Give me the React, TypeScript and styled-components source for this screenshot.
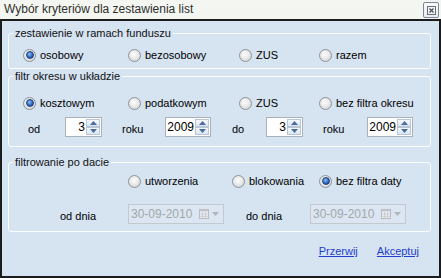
import React from 'react'
import styled, { createGlobalStyle } from 'styled-components'

const GlobalStyle = createGlobalStyle`
  html, body {
    margin: 0;
    padding: 0;
    width: 441px;
    height: 278px;
    overflow: hidden;
    font-family: "Liberation Sans", Arial, sans-serif;
  }
`

const Window = styled.div`
  width: 441px;
  height: 278px;
  display: flex;
  flex-direction: column;
  box-sizing: border-box;
  background: linear-gradient(#f4f7f1, #ebf1e9);
`

const TitleBar = styled.div`
  height: 19px;
  display: flex;
  align-items: center;
  justify-content: space-between;
  padding: 0 2px 0 4px;
  .title {
    font-size: 12px;
    color: #2e2e2e;
    line-height: 19px;
  }
`

const CloseBtn = styled.div`
  width: 16px;
  height: 16px;
  box-sizing: border-box;
  border: 1px solid #7c8896;
  border-radius: 2px;
  background: linear-gradient(#fafbfc, #e9edf1);
  display: flex;
  align-items: center;
  justify-content: center;
  margin-top: 1px;
`

const Body = styled.div`
  flex: 1;
  border: 2px solid #1c1c1c;
  background: #d6e3f1;
  padding: 5px 8px 0 6px;
  display: flex;
  flex-direction: column;
  font-size: 11px;
  color: #000;
`

const Group = styled.fieldset<{ $pt: number; $pb: number; $mt?: number }>`
  margin: ${p => p.$mt ?? 0}px 0 0 0;
  border: 1px solid #fbfdff;
  border-radius: 3px;
  padding: ${p => p.$pt}px 0 ${p => p.$pb}px 0;
  min-width: 0;
  display: flex;
  flex-direction: column;
`

const Legend = styled.legend`
  margin-left: 4px;
  padding: 0 2px;
  line-height: 14px;
  font-size: 11px;
  color: #111;
`

const RadioRow = styled.div<{ $cols: string }>`
  display: grid;
  grid-template-columns: ${p => p.$cols};
  padding-left: 14px;
  height: 16px;
  align-items: center;
`

const RadioItem = styled.label`
  display: flex;
  align-items: center;
  gap: 4px;
  white-space: nowrap;
  line-height: 14px;
`

const RadioDot = styled.span<{ $on?: boolean }>`
  width: 13px;
  height: 13px;
  box-sizing: border-box;
  border-radius: 50%;
  border: 1px solid #8e9297;
  background: radial-gradient(circle at 45% 40%, #ffffff 0%, #e9e9e9 45%, #c9cbcd 100%);
  display: flex;
  align-items: center;
  justify-content: center;
  &::after {
    content: '';
    display: ${p => (p.$on ? 'block' : 'none')};
    width: 6px;
    height: 6px;
    border-radius: 50%;
    border: 1px solid #1d3f7e;
    background: radial-gradient(circle at 40% 35%, #8fc0f0 0%, #2f6bc7 55%, #163e8a 100%);
  }
`

const FieldRow = styled.div<{ $cols: string; $pl: number; $mt: number }>`
  display: grid;
  grid-template-columns: ${p => p.$cols};
  padding-left: ${p => p.$pl}px;
  margin-top: ${p => p.$mt}px;
  height: 20px;
  align-items: center;
`

const FieldLabel = styled.span`
  padding-top: 3px;
  line-height: 14px;
  white-space: nowrap;
`

const SpinBox = styled.div<{ $w: number }>`
  width: ${p => p.$w}px;
  height: 20px;
  box-sizing: border-box;
  border: 1px solid #a9b1bb;
  background: #fff;
  display: flex;
  justify-self: start;
  .value {
    flex: 1;
    text-align: right;
    line-height: 18px;
    font-size: 12px;
    padding-right: 1px;
  }
  .arrows {
    width: 14px;
    display: flex;
    flex-direction: column;
    padding: 1px 1px 1px 0;
    gap: 0;
  }
`

const SpinHalf = styled.div`
  flex: 1;
  border: 1px solid #b7c5d7;
  background: linear-gradient(#f4f8fc, #dbe6f2);
  display: flex;
  align-items: center;
  justify-content: center;
`

const DateBox = styled.div`
  width: 96px;
  height: 20px;
  box-sizing: border-box;
  border: 1px solid #c3c9d1;
  background: #dbe6f2;
  display: flex;
  align-items: center;
  justify-self: start;
  color: #a2a6ab;
  font-size: 12px;
  .text {
    flex: 1;
    padding-left: 2px;
    line-height: 18px;
  }
  .icons {
    display: flex;
    align-items: center;
    gap: 3px;
    padding-right: 4px;
  }
`

const Footer = styled.div`
  display: flex;
  justify-content: flex-end;
  gap: 19px;
  padding-right: 12px;
  margin-top: 12px;
`

const LinkBtn = styled.a`
  color: #1f3fcc;
  text-decoration: underline;
  line-height: 14px;
  font-size: 11px;
  cursor: pointer;
`

const Radio = ({ label, on }: { label: string; on?: boolean }) => (
  <RadioItem>
    <RadioDot $on={on} />
    {label}
  </RadioItem>
)

const Spinner = ({ value, w }: { value: string; w: number }) => (
  <SpinBox $w={w}>
    <div className='value'>{value}</div>
    <div className='arrows'>
      <SpinHalf>
        <svg width='7' height='4' viewBox='0 0 7 4'>
          <path d='M0 4 L3.5 0 L7 4 Z' fill='#4b6b9e' />
        </svg>
      </SpinHalf>
      <SpinHalf>
        <svg width='7' height='4' viewBox='0 0 7 4'>
          <path d='M0 0 L3.5 4 L7 0 Z' fill='#4b6b9e' />
        </svg>
      </SpinHalf>
    </div>
  </SpinBox>
)

const DatePicker = ({ value }: { value: string }) => (
  <DateBox>
    <span className='text'>{value}</span>
    <span className='icons'>
      <svg width='10' height='10' viewBox='0 0 10 10'>
        <rect x='0.5' y='0.5' width='9' height='9' fill='#eef1f4' stroke='#b5b9be' />
        <rect x='0.5' y='0.5' width='9' height='2' fill='#c3c7cc' />
        <path d='M3.5 3 V9.5 M6.5 3 V9.5 M0.5 5 H9.5 M0.5 7.3 H9.5' stroke='#c9cdd2' strokeWidth='1' />
      </svg>
      <svg width='7' height='4' viewBox='0 0 7 4'>
        <path d='M0 0 L3.5 4 L7 0 Z' fill='#b1b5ba' />
      </svg>
    </span>
  </DateBox>
)

const App = () => {
  return (
    <>
      <GlobalStyle />
      <Window>
        <TitleBar>
          <span className='title'>Wybór kryteriów dla zestawienia list</span>
          <CloseBtn>
            <svg width='9' height='9' viewBox='0 0 9 9'>
              <rect x='0.5' y='0.5' width='8' height='8' fill='none' stroke='#6a6f75' />
              <path d='M2.5 2.5 L6.5 6.5 M6.5 2.5 L2.5 6.5' stroke='#4a4f55' strokeWidth='1.2' />
            </svg>
          </CloseBtn>
        </TitleBar>
        <Body>
          <Group $pt={7} $pb={5}>
            <Legend>zestawienie w ramach funduszu</Legend>
            <RadioRow $cols='105px 111px 80px auto'>
              <Radio label='osobowy' on />
              <Radio label='bezosobowy' />
              <Radio label='ZUS' />
              <Radio label='razem' />
            </RadioRow>
          </Group>

          <Group $pt={12} $pb={9}>
            <Legend>filtr okresu w układzie</Legend>
            <RadioRow $cols='105px 111px 80px auto'>
              <Radio label='kosztowym' on />
              <Radio label='podatkowym' />
              <Radio label='ZUS' />
              <Radio label='bez filtra okresu' />
            </RadioRow>
            <FieldRow $cols='37px 57px 43px 67px 34px 57px 44px 46px' $pl={19} $mt={6}>
              <FieldLabel>od</FieldLabel>
              <Spinner value='3' w={37} />
              <FieldLabel>roku</FieldLabel>
              <Spinner value='2009' w={46} />
              <FieldLabel>do</FieldLabel>
              <Spinner value='3' w={37} />
              <FieldLabel>roku</FieldLabel>
              <Spinner value='2009' w={46} />
            </FieldRow>
          </Group>

          <Group $pt={4} $pb={7} $mt={8}>
            <Legend>filtrowanie po dacie</Legend>
            <RadioRow $cols='105px 104px 87px auto'>
              <span />
              <Radio label='utworzenia' />
              <Radio label='blokowania' />
              <Radio label='bez filtra daty' on />
            </RadioRow>
            <FieldRow $cols='68px 118px 64px 96px' $pl={51} $mt={15}>
              <FieldLabel>od dnia</FieldLabel>
              <DatePicker value='30-09-2010' />
              <FieldLabel>do dnia</FieldLabel>
              <DatePicker value='30-09-2010' />
            </FieldRow>
          </Group>

          <Footer>
            <LinkBtn>Przerwij</LinkBtn>
            <LinkBtn>Akceptuj</LinkBtn>
          </Footer>
        </Body>
      </Window>
    </>
  )
}

export default App
